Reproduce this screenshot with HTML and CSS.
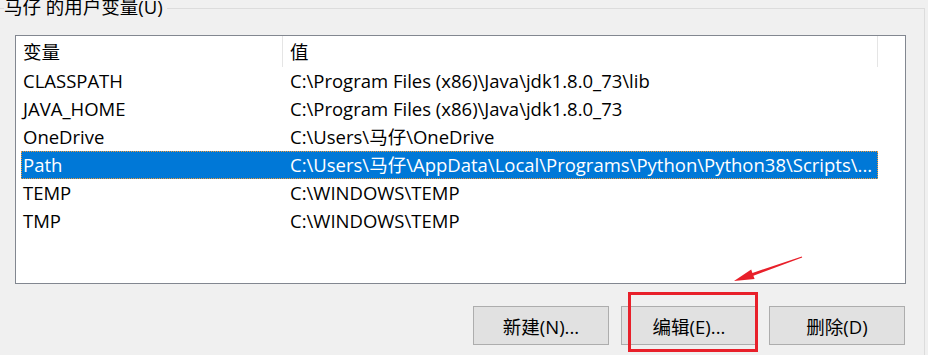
FILE: index.html
```html
<!DOCTYPE html>
<html lang="zh-CN">
<head>
  <meta charset="UTF-8" />
  <title>环境变量</title>
  <link rel="stylesheet" href="styles.css">
</head>
<body>
  <div class="group">
    <div class="legend">马仔 的用户变量(U)</div>

    <div class="listbox">
      <div class="header">
        <div class="hcell name">变量</div>
        <div class="hcell value">值</div>
      </div>
      <div class="row"><span class="c1">CLASSPATH</span><span class="c2">C:\Program Files (x86)\Java\jdk1.8.0_73\lib</span></div>
      <div class="row"><span class="c1">JAVA_HOME</span><span class="c2">C:\Program Files (x86)\Java\jdk1.8.0_73</span></div>
      <div class="row"><span class="c1">OneDrive</span><span class="c2">C:\Users\马仔\OneDrive</span></div>
      <div class="row selected"><span class="c1">Path</span><span class="c2">C:\Users\马仔\AppData\Local\Programs\Python\Python38\Scripts\...</span></div>
      <div class="row"><span class="c1">TEMP</span><span class="c2">C:\WINDOWS\TEMP</span></div>
      <div class="row"><span class="c1">TMP</span><span class="c2">C:\WINDOWS\TEMP</span></div>
    </div>

    <div class="buttons">
      <button>新建(N)...</button>
      <button class="marked">编辑(E)...</button>
      <button>删除(D)</button>
    </div>
  </div>

  <!-- annotation arrow pointing at the edit button -->
  <svg class="arrow" width="80" height="36" viewBox="0 0 80 36">
    <polygon points="6,31 23.2,19.6 24.4,22.9 73.8,6.5 74.2,7.5 25.4,25.7 26.6,29" fill="#e8202a" />
  </svg>
</body>
</html>
```

FILE: styles.css
```css
body {
  margin: 0;
  background: #f0f0f0;
  font-family: "Open Sans", "Noto Sans CJK SC", sans-serif;
  font-size: 18.5px;
  color: #000;
  height: 355px;
  overflow: hidden;
  position: relative;
}

.group {
  margin: 8px 3px 0 0;
  height: 346px;
  border-top: 1px solid #dcdcdc;
  border-right: 1px solid #dcdcdc;
}

.legend {
  width: max-content;
  height: 22px;
  margin: -13px 0 0 4px;
  padding-right: 4px;
  background: #f0f0f0;
  line-height: 22px;
}

.listbox {
  margin: 17px 0 0 15px;
  width: 889px;
  height: 247px;
  border: 1px solid #828790;
  background: #fff;
}

.header {
  display: flex;
  height: 31px;
}

.hcell {
  line-height: 31px;
  padding-left: 7px;
  border-right: 1px solid #e5e5e5;
  box-sizing: border-box;
}

.hcell.name {
  width: 267px;
}

.hcell.value {
  width: 595px;
}

.row {
  display: flex;
  margin-left: 5px;
  width: 857px;
  height: 28px;
  line-height: 28px;
  box-sizing: border-box;
  white-space: nowrap;
}

.row .c1 {
  width: 267px;
  padding-left: 2px;
  box-sizing: border-box;
}

.row .c2 {
  flex: 1;
  padding-left: 2px;
  overflow: hidden;
}

.row.selected {
  background: #0078d7;
  color: #fff;
  outline: 1px dotted #f09a3a;
  outline-offset: -1px;
}

.buttons {
  display: flex;
  justify-content: flex-end;
  gap: 12px;
  width: 905px;
  margin-top: 22px;
}

button {
  width: 136px;
  height: 39px;
  background: #e1e1e1;
  border: 1px solid #adadad;
  font-family: inherit;
  font-size: 18.5px;
  color: #000;
  padding: 0;
}

.marked {
  position: relative;
}

.marked::after {
  content: "";
  position: absolute;
  left: 6px;
  top: -15px;
  width: 124px;
  height: 54px;
  border: 3px solid #e8202a;
}

.arrow {
  position: absolute;
  left: 728px;
  top: 250px;
}
```
